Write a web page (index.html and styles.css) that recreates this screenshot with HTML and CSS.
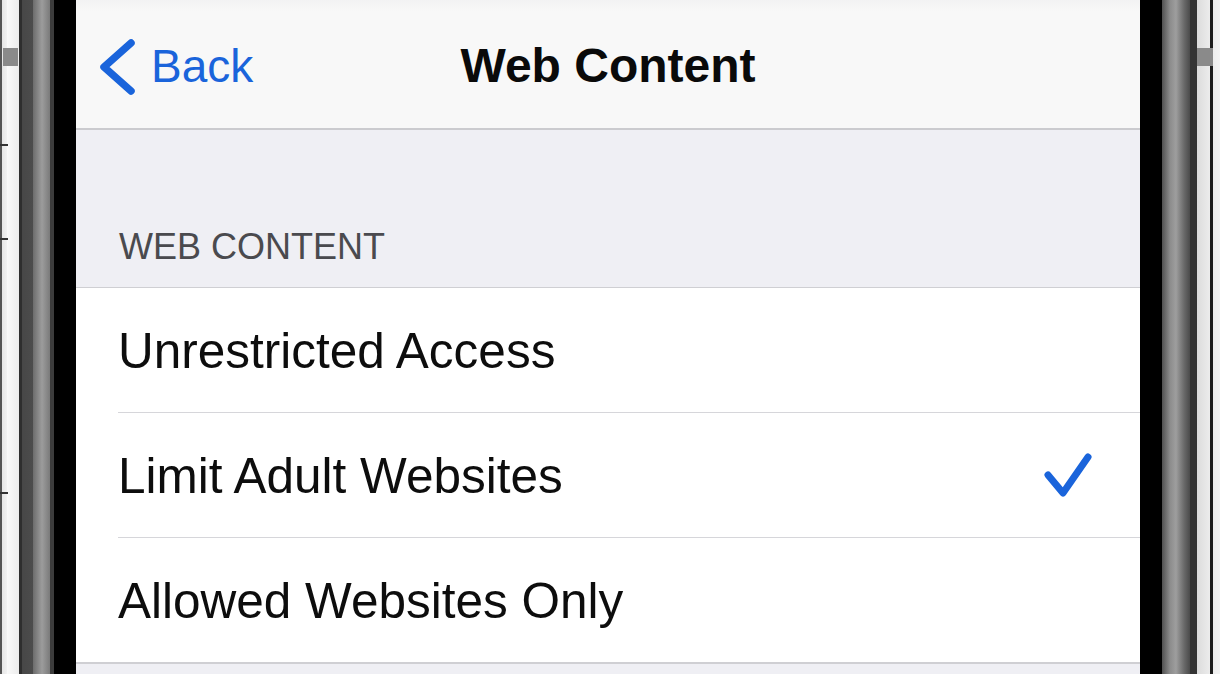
FILE: index.html
```html
<!DOCTYPE html>
<html lang="en">
<head>
<meta charset="utf-8">
<title>Web Content</title>
<link rel="stylesheet" href="styles.css">
</head>
<body>
<div class="device">
  <div class="bezel bezel-left">
    <span class="side-mark mark-left"></span>
  </div>
  <main class="screen">
    <header class="nav">
      <a class="back" href="#">
        <svg class="chevron" width="40" height="60" viewBox="0 0 40 60" aria-hidden="true">
          <path d="M33 7 L6 31 L33 55" fill="none" stroke="#1a64db" stroke-width="7.5" stroke-linecap="round" stroke-linejoin="round"/>
        </svg>
        <span>Back</span>
      </a>
      <h1 class="title">Web Content</h1>
      <span class="nav-spacer"></span>
    </header>
    <section class="group">
      <div class="group-header">WEB CONTENT</div>
      <ul class="list">
        <li class="row"><div class="cell"><span>Unrestricted Access</span></div></li>
        <li class="row"><div class="cell"><span>Limit Adult Websites</span>
          <svg class="check" width="56" height="50" viewBox="0 0 56 50" aria-hidden="true">
            <path d="M8 25 L23 43 L48 7" fill="none" stroke="#1a64db" stroke-width="7" stroke-linecap="round" stroke-linejoin="round"/>
          </svg></div></li>
        <li class="row"><div class="cell"><span>Allowed Websites Only</span></div></li>
      </ul>
    </section>
  </main>
  <div class="bezel bezel-right">
    <span class="side-mark mark-right"></span>
  </div>
</div>
</body>
</html>
```

FILE: styles.css
```css
html, body {
  margin: 0;
  padding: 0;
  height: 674px;
  overflow: hidden;
  background: #000;
}

.device {
  display: flex;
  width: 1220px;
  height: 674px;
  font-family: "Liberation Sans", Arial, sans-serif;
}

.bezel {
  position: relative;
  flex: none;
  height: 100%;
}

.bezel-left {
  width: 76px;
  background:
    linear-gradient(#333, #333) 0 144px / 8px 2px no-repeat,
    linear-gradient(#333, #333) 0 238px / 8px 2px no-repeat,
    linear-gradient(#333, #333) 0 492px / 8px 2px no-repeat,
    linear-gradient(to right,
      #555 0, #555 2px,
      #e6e6e6 2px, #f2f2f2 7px,
      #fafafa 7px, #ececec 19px,
      #2e2e2e 19px, #2e2e2e 22px,
      #474747 22px, #4c4c4c 33px,
      #6c6c6c 33px, #9c9c9c 42px, #7a7a7a 50px,
      #3c3c3c 50px, #3c3c3c 54px,
      #000 54px, #000 76px);
}

.bezel-right {
  width: 80px;
  background: linear-gradient(to right,
    #000 0, #000 22px,
    #505050 22px, #8c8c8c 30px, #9e9e9e 36px, #6a6a6a 44px, #4a4a4a 50px,
    #343434 50px, #343434 57px,
    #dcdcdc 57px, #ececec 70px,
    #1e1e1e 70px, #1e1e1e 73px,
    #eeeeee 73px, #f4f4f4 80px);
}

.side-mark {
  position: absolute;
  top: 48px;
  height: 18px;
  background: #8a8a8a;
}

.mark-left {
  left: 3px;
  width: 15px;
}

.mark-right {
  left: 57px;
  width: 16px;
}

.screen {
  flex: none;
  width: 1064px;
  height: 100%;
  display: flex;
  flex-direction: column;
  background: #efeff4;
}

.nav {
  flex: none;
  height: 130px;
  display: grid;
  grid-template-columns: 1fr auto 1fr;
  align-items: center;
  padding-top: 4px;
  box-sizing: border-box;
  background: linear-gradient(to bottom, #f2f2f3 0, #f8f8f8 12px, #f8f8f8 100%);
  border-bottom: 2px solid #cbcbcf;
}

.back {
  display: flex;
  align-items: center;
  gap: 13px;
  padding-left: 22px;
  color: #1a64db;
  text-decoration: none;
  font-size: 46px;
  line-height: 1;
}

.chevron {
  flex: none;
  display: block;
}

.title {
  margin: 0;
  font-size: 48px;
  font-weight: 700;
  color: #0a0a0a;
  line-height: 1;
}

.group {
  flex: none;
}

.group-header {
  height: 158px;
  box-sizing: border-box;
  display: flex;
  align-items: flex-end;
  padding: 0 0 22px 43px;
  font-size: 36px;
  line-height: 36px;
  color: #4a4a4e;
  border-bottom: 1px solid #cfcfd3;
}

.list {
  margin: 0;
  padding: 0;
  list-style: none;
  background: #fff;
  border-bottom: 2px solid #cfcfd3;
}

.row {
  padding-left: 42px;
}

.cell {
  height: 124px;
  display: flex;
  align-items: center;
  justify-content: space-between;
  padding-right: 44px;
  font-size: 49.5px;
  color: #0d0d0d;
  border-bottom: 1px solid #d6d6da;
}

.row:last-child .cell {
  border-bottom: 0;
}

.check {
  flex: none;
  display: block;
}
```
